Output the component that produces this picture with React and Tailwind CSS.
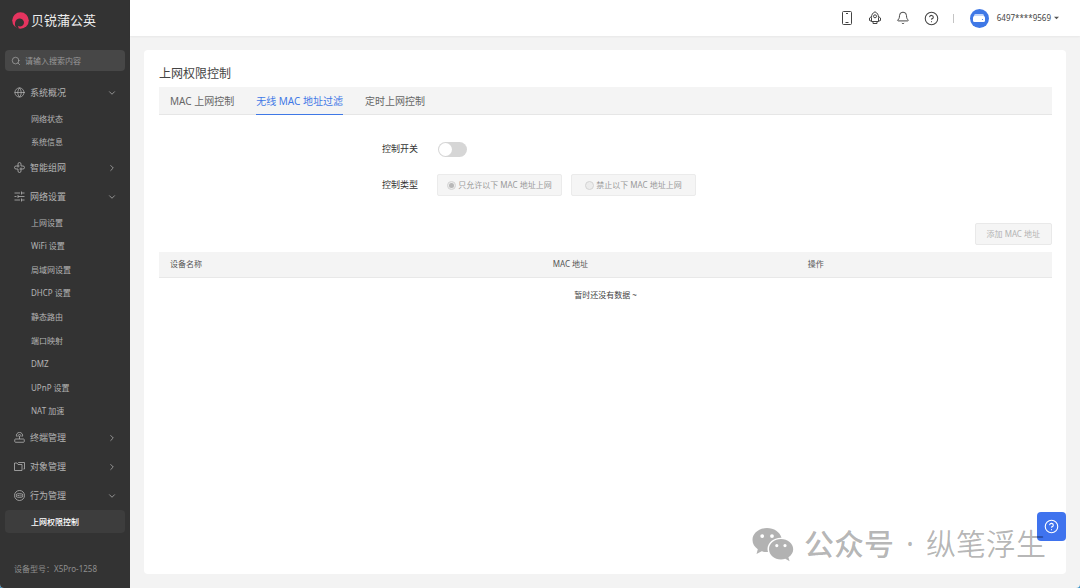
import React, { useState } from 'react';
import { Search, ChevronDown, ChevronRight, Globe, Bell, CircleHelp } from 'lucide-react';

const MeshIcon = (props) => (
  <svg viewBox="0 0 22 22" fill="none" stroke="currentColor" {...props}>
    <path d="M8 11V4a3 3 0 0 1 6 0v4h4a3 3 0 0 1 0 6h-7M14 11v7a3 3 0 0 1-6 0v-4H4a3 3 0 0 1 0-6h7" />
  </svg>
);

const SlidersIcon = (props) => (
  <svg viewBox="0 0 22 22" fill="none" stroke="currentColor" {...props}>
    <path d="M1 4h11M15 4h6M1 11h4M8 11h13M1 18h11M15 18h6M15 1v6M8 8v6M15 15v6" />
  </svg>
);

const RouterIcon = (props) => (
  <svg viewBox="0 0 22 22" fill="none" stroke="currentColor" {...props}>
    <rect x="1.5" y="14" width="19" height="6.5" rx="1.5" />
    <path d="M11 14V8M5 9a6.3 6.3 0 1 1 12 0M8 9.5a3.2 3.2 0 1 1 6 0" />
  </svg>
);

const FoldersIcon = (props) => (
  <svg viewBox="0 0 22 22" fill="none" stroke="currentColor" {...props}>
    <path d="M1 19V4h5l2 3h8v12zM9 4V3h12v13h-2" />
  </svg>
);

const BehaviorIcon = (props) => (
  <svg viewBox="0 0 22 22" fill="none" stroke="currentColor" {...props}>
    <circle cx="11" cy="11" r="10" />
    <rect x="4.5" y="7.5" width="13" height="7" rx="2.5" />
    <path d="M7 11h4M14 9.5v3" />
  </svg>
);

const PhoneIcon = (props) => (
  <svg viewBox="0 0 14 14" fill="none" stroke="currentColor" {...props}>
    <rect x="2.5" y="0.5" width="9" height="13" rx="1" />
    <path d="M5.500 11.500h3M6 2.500h2" />
  </svg>
);

const RocketIcon = (props) => (
  <svg viewBox="0 0 14 14" fill="none" stroke="currentColor" {...props}>
    <path d="M7 .8C4.500 2 3.500 3.800 3.500 6.500v4h7v-4C10.500 3.800 9.500 2 7 .8z" />
    <circle cx="7" cy="5.300" r="1.500" />
    <path d="M3.500 5.500 1.500 7v2.500l2 .7M10.500 5.500l2 1.500v2.500l-2 .7M5 11v1.500h4V11" />
  </svg>
);

const WechatIcon = (props) => (
  <svg viewBox="0 0 42 35" fill="currentColor" {...props}>
    <path
      fillRule="evenodd"
      d="M15 1C7 1 .5 6.200.5 13c0 3.800 2 7 5.300 9.200L4.500 27l5.200-2.700c1.700.5 3.500.8 5.300.8h1A11.500 11.500 0 0 1 15.500 22c0-6.300 6-11.300 13.300-11.300h.7C28 5 22 1 15 1zM10.200 7.200a1.900 1.900 0 1 1 0 3.800 1.900 1.900 0 0 1 0-3.800zm9.800 0a1.900 1.900 0 1 1 0 3.800 1.900 1.900 0 0 1 0-3.800z"
    />
    <path
      fillRule="evenodd"
      d="M29 12c-6.700 0-12 4.500-12 10.200s5.300 10.200 12 10.200c1.500 0 3-.2 4.300-.6l4.300 2.400-1.200-4c2.900-1.900 4.800-4.700 4.800-8C41.200 16.500 35.700 12 29 12zm-4.200 5a1.600 1.600 0 1 1 0 3.200 1.600 1.600 0 0 1 0-3.200zm8.200 0a1.600 1.600 0 1 1 0 3.200 1.600 1.600 0 0 1 0-3.200z"
    />
  </svg>
);

const menu = [
  { label: '系统概况', icon: Globe, open: true, listClass: 'h-[46px]', children: ['网络状态', '系统信息'] },
  { label: '智能组网', icon: MeshIcon },
  {
    label: '网络设置',
    icon: SlidersIcon,
    open: true,
    listClass: 'h-[212px]',
    children: ['上网设置', 'WiFi 设置', '局域网设置', 'DHCP 设置', '静态路由', '端口映射', 'DMZ', 'UPnP 设置', 'NAT 加速'],
  },
  { label: '终端管理', icon: RouterIcon },
  { label: '对象管理', icon: FoldersIcon },
  { label: '行为管理', icon: BehaviorIcon, open: true, listClass: 'h-[23px]', children: ['上网权限控制'] },
];

const tabs = ['MAC 上网控制', '无线 MAC 地址过滤', '定时上网控制'];

const Sidebar = () => (
  <aside className="flex w-[130px] shrink-0 flex-col bg-[#333333] px-[5px] text-[#b4b4b4]">
    <div className="flex h-[50px] items-center gap-0.5 pb-[10px] pl-[7px]">
      <svg viewBox="0 0 17 17" className="size-[17px]">
        <circle cx="8.5" cy="8.5" r="8.3" fill="#e5345f" />
        <path d="M3.500 14.800C2 10.500 4 6.500 7.500 6.500a4 4 0 0 1 2.800 7.200c-1.500 1-3.300.8-4.500 0 .5.900.8 1.600 1 2.700-1.500-.1-2.600-.7-3.300-1.600z" fill="#333333" />
      </svg>
      <span className="text-[13px] leading-5 whitespace-nowrap text-[#ececec]">贝锐蒲公英</span>
    </div>

    <label className="flex h-[21px] items-center gap-1 rounded-sm bg-[#474747] px-1.5">
      <Search className="size-[10px] shrink-0" strokeWidth={1.5} />
      <input
        type="search"
        aria-label="搜索"
        placeholder="请输入搜索内容"
        className="w-full min-w-0 bg-transparent text-[8px] outline-none placeholder:text-[#999999]"
      />
    </label>

    <nav className="mt-[7px]">
      {menu.map(({ label, icon: Icon, open, children, listClass }) => (
        <div key={label}>
          <button className="flex h-[29px] w-full items-center gap-[5px] pr-2 pl-[9px] text-[9px]">
            <Icon className="size-[11px]" strokeWidth={1.6} />
            <span>{label}</span>
            {open ? (
              <ChevronDown className="ml-auto size-[10px]" strokeWidth={1.8} />
            ) : (
              <ChevronRight className="ml-auto size-[10px]" strokeWidth={1.8} />
            )}
          </button>
          {children && (
            <ul className={`grid auto-rows-fr text-[8px] ${listClass}`}>
              {children.map((child) => (
                <li key={child} className="min-h-0">
                  <a
                    href="#"
                    className={`flex h-full items-center rounded-sm pl-[26px] ${
                      child === '上网权限控制' ? 'bg-[#3d3d3d] font-medium text-white' : ''
                    }`}
                  >
                    {child}
                  </a>
                </li>
              ))}
            </ul>
          )}
        </div>
      ))}
    </nav>

    <p className="mt-auto pb-[13px] pl-[9px] text-[8px] leading-3 text-[#8f8f8f]">设备型号：X5Pro-1258</p>
  </aside>
);

const Header = () => (
  <header className="flex h-9 shrink-0 items-center justify-end bg-white pr-[21px] text-[#444444] shadow-xs">
    <div className="flex items-center gap-[14px]">
      <button aria-label="手机"><PhoneIcon className="size-[14px]" /></button>
      <button aria-label="升级"><RocketIcon className="size-[14px]" /></button>
      <button aria-label="通知"><Bell className="size-[14px]" strokeWidth={1.7} /></button>
      <button aria-label="帮助"><CircleHelp className="size-[15px]" strokeWidth={1.7} /></button>
      <span className="h-[9px] w-px bg-[#c4c4c4]" />
    </div>
    <button className="ml-4 flex items-center text-[8px]">
      <span className="mr-2 flex size-[19px] items-center justify-center rounded-full bg-[#3f78e6]">
        <svg viewBox="0 0 12 8" className="h-2 w-3">
          <rect x="1" width="10" height="5" rx="1.5" fill="#c3d6fa" />
          <rect y="2" width="12" height="6" rx="1.5" fill="#ffffff" />
          <circle cx="9.5" cy="5.5" r=".6" fill="#3f78e6" />
        </svg>
      </span>
      6497****9569
      <svg viewBox="0 0 6 4" className="ml-[3px] h-1 w-[5px]" fill="#555555">
        <path d="M0 .5h6L3 3.500z" />
      </svg>
    </button>
  </header>
);

const ControlForm = () => {
  const [enabled, setEnabled] = useState(false);

  return (
    <form className="text-[9px] text-[#333333]">
      <div className="flex h-9 items-center">
        <label htmlFor="switch" className="w-[29%] text-right">控制开关</label>
        <input
          id="switch"
          type="checkbox"
          role="switch"
          checked={enabled}
          onChange={(e) => setEnabled(e.target.checked)}
          className="ml-5 flex h-[15px] w-[29px] appearance-none items-center rounded-full bg-[#d6d6d6] p-px before:size-[13px] before:rounded-full before:bg-white checked:justify-end checked:bg-[#3f78e6]"
        />
      </div>
      <fieldset disabled={!enabled} className="flex h-9 items-center">
        <span className="w-[29%] text-right">控制类型</span>
        <div className="ml-[19px] flex gap-[9px] text-[8px] text-[#999999]">
          {['只允许以下 MAC 地址上网', '禁止以下 MAC 地址上网'].map((text, i) => (
            <label
              key={text}
              className="flex h-[22px] w-[125px] items-center justify-center gap-0.5 rounded-xs border border-[#ebebeb] bg-[#f5f5f5] whitespace-nowrap"
            >
              <input
                type="radio"
                name="type"
                defaultChecked={i === 0}
                className="flex size-[9px] appearance-none items-center justify-center rounded-full border border-[#d4d4d4] bg-[#ececec] checked:before:size-[5px] checked:before:rounded-full checked:before:bg-[#b8b8b8]"
              />
              {text}
            </label>
          ))}
        </div>
      </fieldset>
    </form>
  );
};

const App = () => {
  const [tab, setTab] = useState(tabs[1]);

  return (
    <div className="bg-[#3a93c8] font-['Noto_Sans','Noto_Sans_CJK_SC',sans-serif]">
      <div className="relative flex min-h-screen overflow-hidden rounded-b-[4px] bg-[#f3f3f3]">
        <Sidebar />
        <div className="flex min-w-0 flex-1 flex-col">
          <Header />
          <main className="m-[14px] flex-1 rounded-sm bg-white pt-[15px] pr-[14px] pl-[15px]">
            <h1 className="text-[12px] leading-[18px] text-[#444444]">上网权限控制</h1>

            <div role="tablist" className="mt-1 flex h-7 gap-[22px] border-b border-[#e6e6e6] bg-[#f4f4f4] pl-[11px] text-[10px]">
              {tabs.map((t) => (
                <button
                  key={t}
                  role="tab"
                  aria-selected={t === tab}
                  onClick={() => setTab(t)}
                  className={`-mb-px border-b pt-px ${t === tab ? 'border-[#3f78e6] text-[#3f78e6]' : 'border-transparent text-[#666666]'}`}
                >
                  {t}
                </button>
              ))}
            </div>

            <div className="pt-4">
              <ControlForm />
            </div>

            <div className="mt-5 flex justify-end">
              <button disabled className="h-[22px] rounded-xs border border-[#e9e9e9] bg-[#f5f5f5] px-[11px] text-[8px] text-[#b3b3b3]">
                添加 MAC 地址
              </button>
            </div>

            <table className="mt-[7px] w-full table-fixed text-left text-[8px]">
              <thead className="bg-[#f4f4f4] text-[#555555]">
                <tr className="h-[25px] border-b border-[#e8e8e8]">
                  <th className="w-3/7 pl-[11px] font-normal">设备名称</th>
                  <th className="w-2/7 pl-[11px] font-normal">MAC 地址</th>
                  <th className="w-2/7 pl-[11px] font-normal">操作</th>
                </tr>
              </thead>
              <tbody>
                <tr className="h-9">
                  <td colSpan={3} className="text-center text-[#444444]">暂时还没有数据 ~</td>
                </tr>
              </tbody>
            </table>
          </main>
        </div>

        <button aria-label="在线帮助" className="absolute right-[14px] bottom-[47px] flex size-[29px] items-center justify-center rounded-sm bg-[#3f73ee] text-white">
          <CircleHelp className="size-[15px]" strokeWidth={1.8} />
        </button>

        <div className="pointer-events-none absolute right-[34px] bottom-[22px] flex items-center text-[30px] leading-[44px] text-black/30">
          <WechatIcon className="mr-[10px] h-[35px] w-[42px]" />
          <span className="font-medium">公众号</span>
          <span className="mx-3">·</span>
          <span className="font-[350]">纵笔浮生</span>
        </div>
      </div>
    </div>
  );
};

export default App;
